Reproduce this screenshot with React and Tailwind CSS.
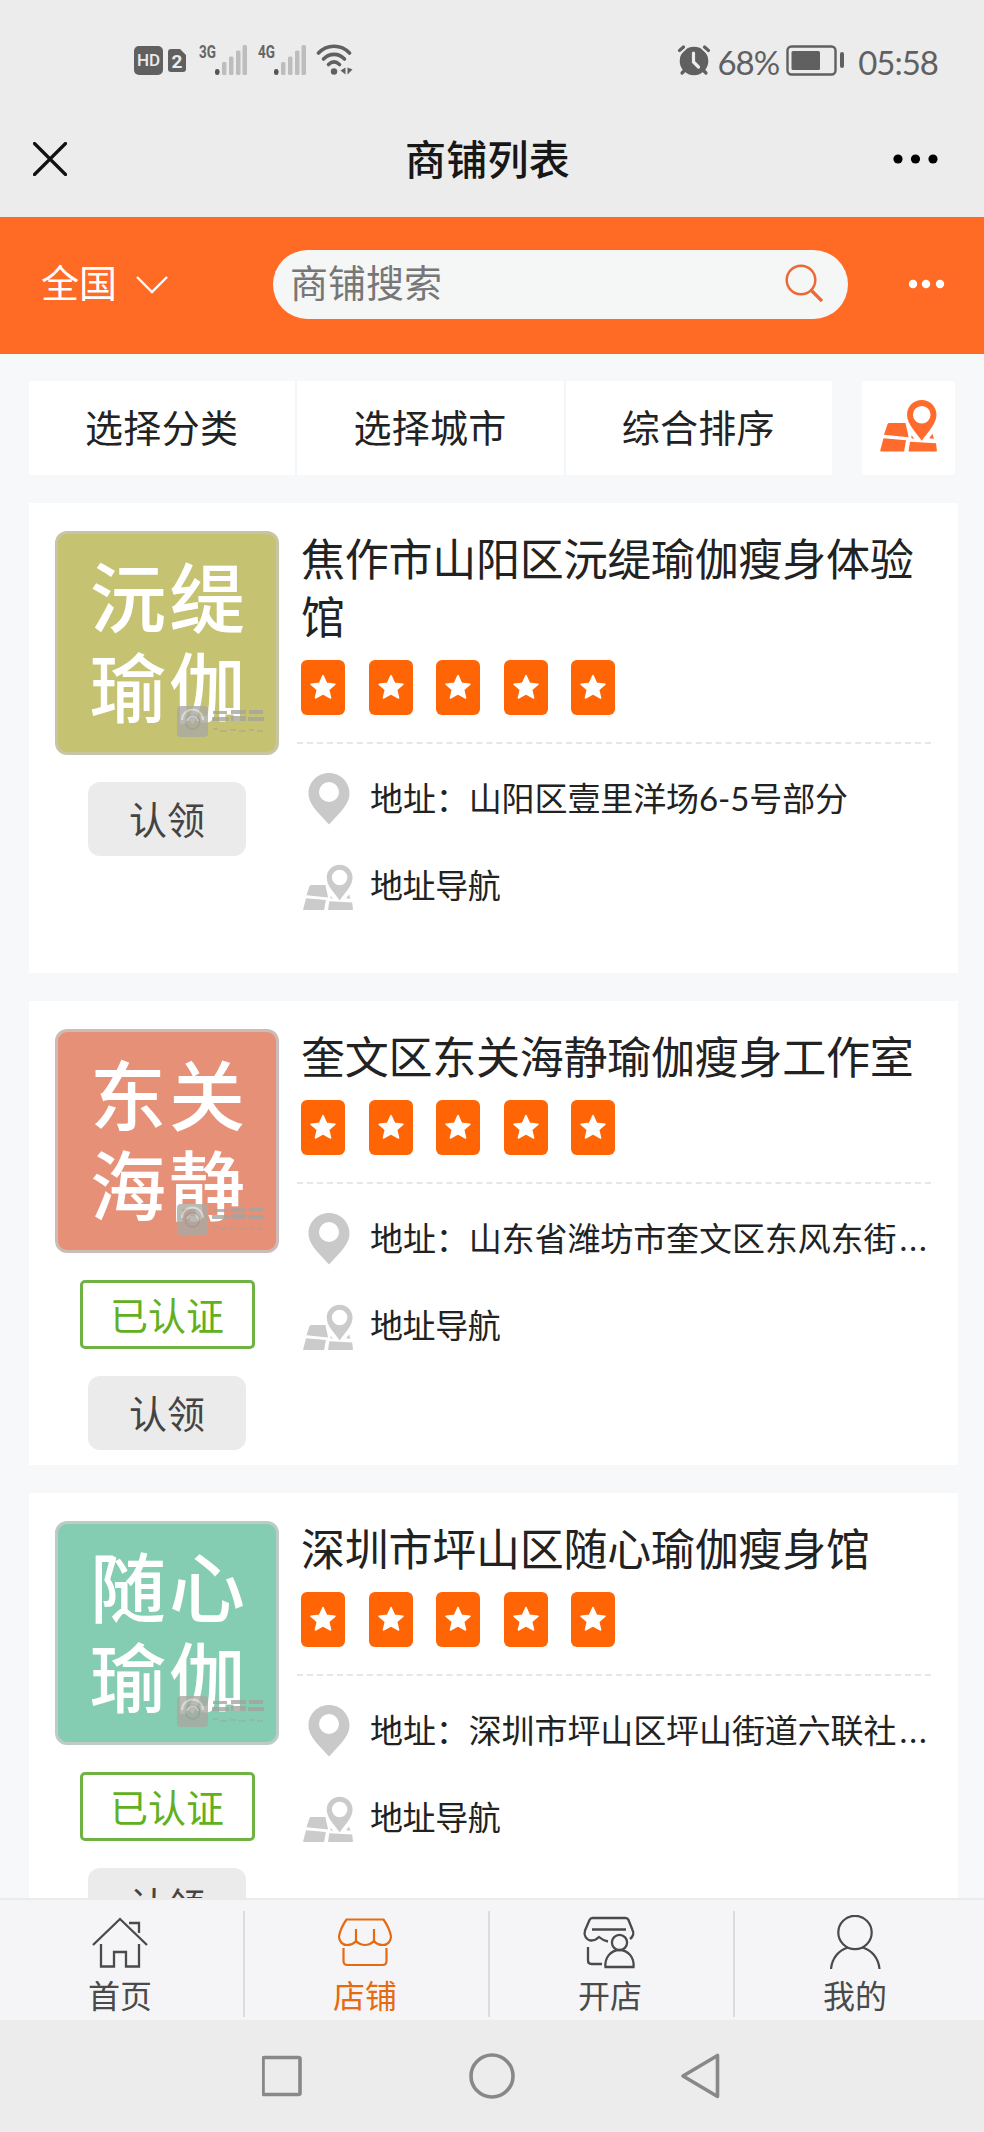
import { Fragment } from 'react';

const FILTERS = ['选择分类', '选择城市', '综合排序'];

const SHOPS = [
  {
    name: '焦作市山阳区沅缇瑜伽瘦身体验馆',
    logo: ['沅缇', '瑜伽'],
    logoClass: 'bg-[#c5c371] border-[#c8c5a6]',
    address: '山阳区壹里洋场6-5号部分',
    verified: false,
    cardClass: 'h-[470px]',
  },
  {
    name: '奎文区东关海静瑜伽瘦身工作室',
    logo: ['东关', '海静'],
    logoClass: 'bg-[#e69078] border-[#cdbcb6]',
    address: '山东省潍坊市奎文区东风东街',
    shortened: true,
    verified: true,
    cardClass: 'h-[464px]',
  },
  {
    name: '深圳市坪山区随心瑜伽瘦身馆',
    logo: ['随心', '瑜伽'],
    logoClass: 'bg-[#84ccb2] border-[#bccbc5]',
    address: '深圳市坪山区坪山街道六联社',
    shortened: true,
    verified: true,
    cardClass: 'h-[464px]',
  },
];

const SignalBars = ({ label }) => (
  <svg width="50" height="34" viewBox="0 0 50 34" className="shrink-0 overflow-visible">
    <text x="0" y="15" fontSize="18" fontWeight="700" textLength="17" lengthAdjust="spacingAndGlyphs" fill="#666" fontFamily="Roboto, sans-serif">{label}</text>
    <rect x="16" y="26" width="4.5" height="6" rx="2.2" fill="#555" />
    <g fill="#bdbdbd">
      <rect x="23" y="19" width="4.5" height="13" rx="1.5" />
      <rect x="30" y="13.5" width="4.5" height="18.5" rx="1.5" />
      <rect x="37" y="7.5" width="4.5" height="24.5" rx="1.5" />
      <rect x="43.5" y="2" width="4.5" height="30" rx="1.5" />
    </g>
  </svg>
);

const WifiIcon = () => (
  <svg width="38" height="34" viewBox="0 0 38 34" fill="none" stroke="#606060" strokeWidth="3.6" strokeLinecap="round">
    <path d="M2.5 10 C11 1 25 1 33.5 10" />
    <path d="M7.5 16 C13.5 9.8 22.5 9.8 28.5 16" />
    <path d="M12.500 21.500 C16 18.300 20 18.300 23.500 21.500" />
    <circle cx="18" cy="28.5" r="3.2" fill="#606060" stroke="none" />
    <path d="M29.5 24.5v7l-5-4zM31.5 24.5v7l5-5z" fill="#606060" stroke="none" />
  </svg>
);

const AlarmIcon = () => (
  <svg width="34" height="32" viewBox="0 0 34 32" fill="none" stroke="#606060" strokeWidth="3.2" strokeLinecap="round">
    <circle cx="17" cy="17" r="14.3" fill="#606060" stroke="none" />
    <path d="M2.5 6.5 6.5 3M31.5 6.5 27.5 3" stroke="#ececec" strokeWidth="7" />
    <path d="M2.5 6.5 6.5 3M31.5 6.5 27.5 3M5 29l3-3M29 29l-3-3" />
    <path d="M16.5 9v9l5 5" stroke="#ececec" />
  </svg>
);

const BatteryIcon = () => (
  <svg width="60" height="31" viewBox="0 0 60 31">
    <rect x="1.5" y="1.5" width="48" height="28" rx="4" fill="none" stroke="#606060" strokeWidth="2.4" />
    <rect x="5.5" y="6" width="28.5" height="19" rx="1.5" fill="#606060" />
    <rect x="54" y="7" width="4" height="16" rx="2" fill="#606060" />
  </svg>
);

const MapPinIcon = ({ className }) => (
  <svg viewBox="0 0 58 53" fill="currentColor" className={className}>
    <path fillRule="evenodd" d="M42.500 0C34 0 27.500 6.600 27.500 15c0 9.500 9 18 15 26.500C48.500 33 57.500 24.500 57.500 15 57.500 6.600 51 0 42.500 0zm0 6a9 9 0 1 1 0 18 9 9 0 0 1 0-18z" />
    <path d="M9.5 23.5H26c.8 5.5 2.4 9 3 14.5L4 35.5 7.5 25q.6-1.500 2-1.500z" />
    <path d="M3.5 39 26.500 41 24.500 52.500H1q-1 0-.8-1zM30.500 42.500 57 44l1 7.500q0 1-1 1H29z" />
    <path d="m53.5 34.5 1.5 5-5-.5zM32 36l3 3.500-3-.5z" />
  </svg>
);

const PinIcon = () => (
  <svg width="42" height="52" viewBox="0 0 42 52" fill="#c9c9c9">
    <path fillRule="evenodd" d="M21 0C9.500 0 .5 9 .5 20.500c0 7 4 12.500 8.500 18L21 51.500l12-13c4.500-5.500 8.500-11 8.500-18C41.500 9 32.500 0 21 0zm0 9a10 10 0 1 1 0 20 10 10 0 0 1 0-20z" />
  </svg>
);

const StarBadge = () => (
  <span className="flex h-[55px] w-[44px] items-center justify-center rounded-[6px] bg-[#ff6405]">
    <svg width="28" height="27" viewBox="0 0 28 27" fill="#fff" stroke="#fff" strokeWidth="1.5" strokeLinejoin="round">
      <path d="m14 1.500 3.500 7.700 8.500 1-6.300 5.600 1.900 8.200L14 19.800 6.400 24l1.900-8.200L2 10.200l8.500-1z" />
    </svg>
  </span>
);

// faint platform stamp in the corner of every logo
const LogoStamp = () => (
  <svg width="88" height="32" viewBox="0 0 88 32" className="absolute right-[11px] bottom-[14px] opacity-80">
    <rect x="0" y="0" width="31" height="31" rx="4" fill="#aaa9a3" />
    <path d="M5 14a10.500 10.500 0 0 1 21 0M10 15a5.500 5.500 0 0 1 11 0" fill="none" stroke="#d2d1cc" strokeWidth="2" />
    <circle cx="15.5" cy="16" r="7" fill="none" stroke="#999" strokeWidth="1.5" />
    <g fill="#a5a49f">
      <path d="M36 5h14v3H36zM35 11h17v4H35zM54 4h15v4H54zM54 10h15v5H54zM72 4h14v4H72zM71 11h16v4H71z" />
      <path d="M36 22h5v2h-5zM43 24h7v2h-7zM53 23h6v2h-6zM62 24h7v2h-7zM72 23h5v2h-5zM80 24h6v2h-6z" opacity=".6" />
    </g>
  </svg>
);

const ShopCard = ({ shop }) => (
  <article className={`flex shrink-0 bg-white pt-7 pr-[27px] pl-[26px] ${shop.cardClass}`}>
    <div className="flex w-[224px] shrink-0 flex-col items-center gap-[27px]">
      <div className={`relative flex h-[224px] w-[224px] shrink-0 flex-col items-center justify-center rounded-[12px] border-[3px] pl-1 text-[76px] leading-[90px] font-medium tracking-[3px] text-white ${shop.logoClass}`}>
        {shop.logo.map((line) => (
          <span key={line}>{line}</span>
        ))}
        <LogoStamp />
      </div>
      {shop.verified && (
        <span className="flex h-[69px] w-[175px] shrink-0 items-center justify-center rounded-[5px] border-[3px] border-[#6fb344] text-[38px] leading-none text-[#62b01e]">
          已认证
        </span>
      )}
      <button className="flex h-[74px] w-[158px] shrink-0 items-center justify-center rounded-[12px] bg-[#ebebeb] text-[38px] leading-none text-[#444]">
        认领
      </button>
    </div>

    <div className="ml-[22px] min-w-0 flex-1 text-[#222]">
      <h2 className="-mt-px text-[44px] leading-[58px] tracking-[-0.25px]">{shop.name}</h2>
      <div className="mt-[14px] flex gap-[23.5px]">
        {[0, 1, 2, 3, 4].map((n) => (
          <StarBadge key={n} />
        ))}
      </div>
      <div className="mt-[27px] -ml-1 border-t-2 border-dashed border-[#e6e6e6]" />
      <div className="mt-[11px] flex h-[87px] items-center">
        <span className="flex w-[69px] shrink-0 pl-[7px]">
          <PinIcon />
        </span>
        <p className="pb-px text-[33px] leading-[48px] tracking-[-0.1px] whitespace-nowrap">
          地址：{shop.address}
          {shop.shortened && <span className="ml-[3px] tracking-[2px]">...</span>}
        </p>
      </div>
      <div className="flex h-[87px] items-center">
        <span className="flex w-[69px] shrink-0 pt-1 pl-0.5">
          <MapPinIcon className="h-[47px] w-[50px] text-[#cbcbcb]" />
        </span>
        <p className="pb-px text-[33px] leading-[48px] tracking-[-0.4px]">地址导航</p>
      </div>
    </div>
  </article>
);

const HomeIcon = () => (
  <svg width="56" height="56" viewBox="0 0 56 56" fill="none" stroke="currentColor" strokeWidth="2.3">
    <path d="M1 30 28 4l27 26M37 8h10v10M9 29v22.500h13V37h12v14.500h13V29" />
  </svg>
);

const ShopIcon = () => (
  <svg width="56" height="56" viewBox="0 0 56 56" fill="none" stroke="currentColor" strokeWidth="2.2">
    <path d="M9.500 4.500h37q6 8.500 7.500 17c0 5-3.500 8.500-8 8.500-4 0-7-1.500-9-4-2.500 2.500-5.500 4-9 4s-6.500-1.500-9-4c-2 2.500-5 4-9 4-4.500 0-8-3.500-8-8.500q1.500-8.500 7.500-17z" />
    <path d="M19 14v12M37 14v12M6.500 33v13q0 4 4 4h35q4 0 4-4V33" />
  </svg>
);

const OpenShopIcon = () => (
  <svg width="56" height="56" viewBox="0 0 56 56" fill="none" stroke="currentColor" strokeWidth="2.3">
    <path d="M48 24q5-4 2.500-9L46.500 5q-.8-2-3-2h-33q-2 0-3 2L3 15.500C1.500 20 4 25 9 25.500q4 .3 8-3.500 4 3.500 9 4.500M10 14.500h34M6 32v13.500q0 3.500 3.500 3.500H20" />
    <circle cx="37.5" cy="27.5" r="7.6" />
    <path d="M23.500 52c-1-9 5-17 14-17s15 8 14 17z" />
  </svg>
);

const UserIcon = () => (
  <svg width="56" height="56" viewBox="0 0 56 56" fill="none" stroke="currentColor" strokeWidth="2.2">
    <circle cx="28" cy="17.500" r="16.700" />
    <path d="M4 54c1-11 8-19 17-21.500M52.500 54c-1-11-8-19-17-21.500" />
  </svg>
);

const TABS = [
  { label: '首页', Icon: HomeIcon },
  { label: '店铺', Icon: ShopIcon, active: true },
  { label: '开店', Icon: OpenShopIcon },
  { label: '我的', Icon: UserIcon },
];

const App = () => (
  <div className="flex h-[2132px] w-[984px] flex-col overflow-hidden bg-[#f6f8f9] font-['Lato','Noto_Sans_CJK_SC',sans-serif]">
    {/* Phone status bar */}
    <div className="flex h-[100px] shrink-0 items-start justify-between bg-[#ececec] pt-[44px] pr-[46px] pl-[134px] text-[#606060]">
      <div className="flex items-start">
        <span className="mt-0.5 flex h-[29px] w-[29px] items-center justify-center rounded-[5px] bg-[#606060] font-['Roboto'] text-[17px] leading-none font-medium text-[#ececec]">HD</span>
        <svg width="18" height="24" viewBox="0 0 18 24" className="mt-[5px] ml-[5px] overflow-visible">
          <path d="M3 0h9l6 6v14q0 3-3 3H3q-3 0-3-3V3q0-3 3-3z" fill="#606060" />
          <text x="9" y="18.5" textAnchor="middle" fontSize="19" fontWeight="700" fill="#ececec" fontFamily="Roboto, sans-serif">2</text>
        </svg>
        <span className="-mt-px ml-[13px] flex gap-[9px]">
          <SignalBars label="3G" />
          <SignalBars label="4G" />
        </span>
        <span className="-mt-px ml-[8px]">
          <WifiIcon />
        </span>
      </div>
      <div className="flex items-center text-[33px] leading-[36px] tracking-[-1px]">
        <span className="-mt-1">
          <AlarmIcon />
        </span>
        <span className="ml-[6px]">68%</span>
        <span className="-mt-1 mr-[12px] ml-[7px]">
          <BatteryIcon />
        </span>
        <span>05:58</span>
      </div>
    </div>

    {/* Title bar */}
    <header className="flex h-[117px] shrink-0 items-center justify-between bg-[#ececec] px-[33px]">
      <svg width="34" height="34" viewBox="0 0 34 34" stroke="#111" strokeWidth="3.2" strokeLinecap="round">
        <path d="m1.500 1.500 31 31M32.500 1.500l-31 31" />
      </svg>
      <h1 className="mt-0.5 ml-[15px] text-[41px] leading-[60px] font-medium tracking-[0.3px] text-[#171717]">商铺列表</h1>
      <svg width="46" height="10" viewBox="0 0 46 10" fill="#000" className="mr-[12px]">
        <circle cx="5" cy="5" r="4.6" />
        <circle cx="22.5" cy="5" r="4.6" />
        <circle cx="40" cy="5" r="4.6" />
      </svg>
    </header>

    {/* Region + search */}
    <div className="flex h-[137px] shrink-0 items-center bg-[#ff6b25] pb-[3px] pl-[41px] text-[38px] text-white">
      <span className="-mt-1 leading-[56px]">全国</span>
      <svg width="34" height="18" viewBox="0 0 34 18" fill="none" stroke="#fff" strokeWidth="2.4" className="mt-0.5 ml-[18px]">
        <path d="m2 1 15 15L32 1" />
      </svg>
      <div className="ml-[104px] flex h-[69px] w-[575px] items-center justify-between rounded-full bg-[#f5f6f6] pr-[25px] pl-[17px]">
        <span className="-mt-1 leading-[56px] text-[#777]">商铺搜索</span>
        <svg width="38" height="39" viewBox="0 0 38 39" fill="none" stroke="#ea6a35" className="-mt-0.5">
          <circle cx="16" cy="16" r="14.3" strokeWidth="2.5" />
          <path d="m26 26 11 11" strokeWidth="3.3" />
        </svg>
      </div>
      <svg width="38" height="10" viewBox="0 0 38 10" fill="#fff" className="ml-[60px]">
        <circle cx="5" cy="5" r="4.2" />
        <circle cx="18" cy="5" r="4.2" />
        <circle cx="32" cy="5" r="4.2" />
      </svg>
    </div>

    {/* Shop list */}
    <main className="flex min-h-0 flex-1 flex-col gap-7 overflow-hidden pt-[27px] pr-[26px] pl-[29px]">
      <div className="flex h-[94px] shrink-0 items-center">
        <div className="flex h-full w-[803px] items-center bg-white">
          {FILTERS.map((label, i) => (
            <Fragment key={label}>
              {i > 0 && <span className="h-full w-0.5 bg-[#f3f6f8]" />}
              <button className="flex-1 pr-px pb-[3px] text-[38px] leading-[56px] tracking-[0.3px] text-[#222]">{label}</button>
            </Fragment>
          ))}
        </div>
        <button className="ml-[30px] flex h-full w-[93px] items-center justify-center rounded-[4px] bg-white">
          <MapPinIcon className="mb-1 h-[52px] w-[57px] text-[#ff6b2c]" />
        </button>
      </div>
      {SHOPS.map((shop) => (
        <ShopCard key={shop.name} shop={shop} />
      ))}
    </main>

    {/* Tab bar */}
    <nav className="flex h-[122px] shrink-0 items-center border-t-2 border-[#ebebeb] bg-[#f5f5f7] pr-[6px]">
      {TABS.map(({ label, Icon, active }, i) => (
        <Fragment key={label}>
          {i > 0 && <span className="mt-2 h-[106px] w-0.5 bg-[#dcdcdd]" />}
          <a className={`flex flex-1 flex-col items-center pt-3.5 pr-[3px] ${active ? 'text-[#e66a12]' : 'text-[#4a4a4a]'}`}>
            <Icon />
            <span className="mt-0.5 text-[32px] leading-[46px]">{label}</span>
          </a>
        </Fragment>
      ))}
    </nav>

    {/* System navigation */}
    <div className="flex h-[112px] shrink-0 justify-center bg-[#ececed] pt-[32px]">
      <svg width="460" height="48" viewBox="0 0 460 48" fill="none" stroke="#888" strokeWidth="3.6" strokeLinejoin="round">
        <rect x="1" y="5.5" width="37" height="37" rx="1.5" />
        <circle cx="230" cy="24" r="21" />
        <path d="M455.500 3.500v41L421 24z" />
      </svg>
    </div>
  </div>
);

export default App;
